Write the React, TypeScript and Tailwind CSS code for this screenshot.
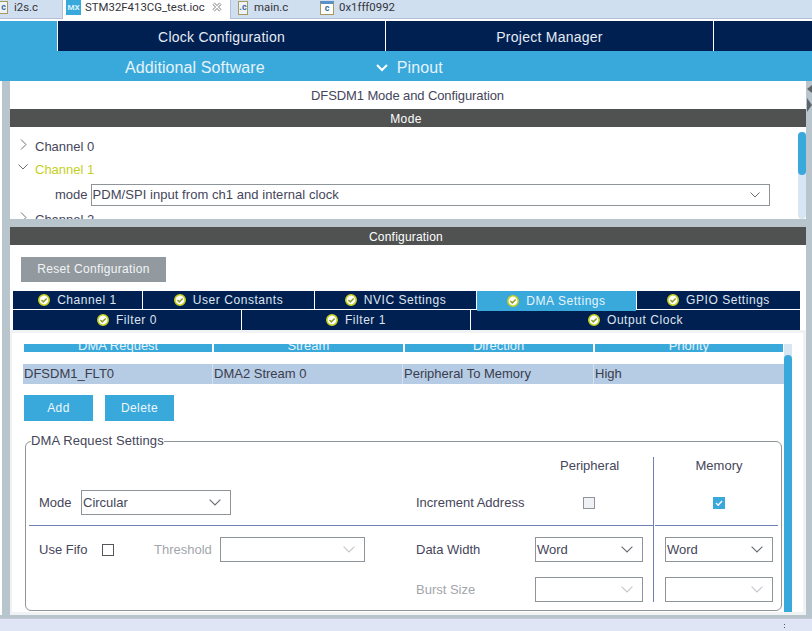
import React from "react";

const CheckDot = () => (
  <svg width="12" height="12" viewBox="0 0 12 12" className="shrink-0">
    <circle cx="6" cy="6" r="5.2" fill="#fff" stroke="#c3cf1b" strokeWidth="1.6" />
    <path d="M3.4 6l1.9 1.9 3.4-3.4" fill="none" stroke="#8fa02a" strokeWidth="1.5" />
  </svg>
);

const Chevron = ({ color = "#6b7076", size = 12 }: { color?: string; size?: number }) => (
  <svg width={size} height={size * 0.6} viewBox="0 0 10 6" className="shrink-0">
    <path d="M.5.5L5 5 9.5.5" fill="none" stroke={color} strokeWidth="1" />
  </svg>
);

const ChevronRight = () => (
  <svg width="7" height="11" viewBox="0 0 7 11">
    <path d="M1 .5L6 5.5 1 10.5" fill="none" stroke="#6b7076" strokeWidth="1" />
  </svg>
);

const CloseIcon = () => (
  <svg width="10" height="10" viewBox="0 0 10 10" className="shrink-0">
    <path d="M1.5 1.5l7 7M8.5 1.5l-7 7" fill="none" stroke="#85888c" strokeWidth="3" />
    <path d="M1.5 1.5l7 7M8.5 1.5l-7 7" fill="none" stroke="#fff" strokeWidth="1.4" />
  </svg>
);

function Tab({ label, active }: { label: string; active?: boolean }) {
  return (
    <div
      className={`h-full flex-1 flex items-center justify-center gap-[7px] text-[12px] tracking-[0.55px] ${
        active ? "bg-[#39a9dc] text-[#e8f4fa]" : "bg-[#002052] text-[#dfe5ee]"
      }`}
    >
      <CheckDot />
      <span>{label}</span>
    </div>
  );
}

function Select({ value, disabled, className }: { value?: string; disabled?: boolean; className: string }) {
  return (
    <div className={`h-[25px] border border-[#8f9498] bg-white flex items-center justify-between pl-[1px] pr-[9px] text-[13px] text-[#45465a] ${className}`}>
      <span>{value}</span>
      <Chevron color={disabled ? "#c4c8cc" : "#6b7076"} />
    </div>
  );
}

export default function App() {
  return (
    <div
      className="w-[812px] h-[631px] overflow-hidden flex flex-col bg-white text-[#45465a]"
      style={{ fontFamily: '"Liberation Sans", Arial, sans-serif' }}
    >
      {/* Editor tabs */}
      <div className="h-[19px] shrink-0 flex bg-[#d0dfef] border-b border-[#b4bfd6] font-['Roboto',sans-serif] text-[11.4px] text-[#33343a]">
        <div className="w-[63px] flex items-center gap-[6px] border-r border-[#b4bfd6] pb-[3px]">
          <span className="w-[8px] h-[13px] overflow-hidden border-y border-r border-[#a89a5a] bg-[#eef3fa] text-[9px] font-bold text-[#3a6ea5] flex items-center justify-end pr-[1px]">c</span>
          <span>i2s.c</span>
        </div>
        <div className="w-[167px] h-[21px] z-10 bg-white flex items-start pl-[3px]">
          <span className="w-[15px] h-[15px] shrink-0 mr-[4px] bg-[#39a9dc] text-[#dff1fa] text-[8px] font-bold flex items-center justify-center">MX</span>
          <span className="leading-[14px] w-[120px] shrink-0 whitespace-nowrap">STM32F413CG_test.ioc</span>
          <span className="ml-[7px] mt-[2px]"><CloseIcon /></span>
        </div>
        <div className="w-[90px] pl-[7px] flex items-center gap-[6px] border-l border-[#b4bfd6] pb-[3px]">
          <span className="w-[10px] h-[14px] shrink-0 border border-[#a89a5a] bg-[#eef3fa] text-[9px] font-bold text-[#3a6ea5] flex items-center justify-center">.c</span>
          <span>main.c</span>
        </div>
        <div className="flex-1 flex items-center gap-[5px] pb-[3px]">
          <span className="w-[14px] h-[14px] shrink-0 border border-[#a89a5a] border-t-[3px] border-t-[#5b8fc7] bg-white text-[9px] font-bold text-[#3a6ea5] flex items-center justify-center">c</span>
          <span>0x1fff0992</span>
        </div>
      </div>
      <div className="h-[2px] shrink-0 bg-white" />

      {/* Perspective nav */}
      <div className="h-[30px] shrink-0 flex bg-[#002052] text-[14px] tracking-[0.25px] text-[#e6ebf2]">
        <div className="w-[57px] bg-[#39a9dc]" />
        <div className="w-[329px] border-x border-white flex items-center justify-center pt-[2px]">Clock Configuration</div>
        <div className="w-[328px] border-r border-white flex items-center justify-center pt-[2px]">Project Manager</div>
      </div>
      <div className="h-[30px] shrink-0 flex items-center bg-[#39a9dc] text-[#e6f3fa] text-[16px] tracking-[0.1px] pt-[3px]">
        <span className="ml-[125px]">Additional Software</span>
        <span className="ml-[111px] mr-[9px]">
          <svg width="12" height="8" viewBox="0 0 12 8">
            <path d="M1 1l5 5 5-5" fill="none" stroke="#fff" strokeWidth="2" />
          </svg>
        </span>
        <span>Pinout</span>
      </div>

      <div className="flex-1 min-h-0 flex">
        <div className="w-[10px] shrink-0 border-l-2 border-white bg-[#b8c5cc]" />

        <div className="w-[796px] shrink-0 flex flex-col">
          <div className="h-[28px] shrink-0 flex items-center justify-center text-[13px] tracking-[-0.1px] pt-[1px] pr-[1px]">DFSDM1 Mode and Configuration</div>
          <div className="h-[18px] shrink-0 bg-[#505251] text-white text-[12px] tracking-[0.4px] flex items-center justify-center pt-[1px] pr-[4px]">Mode</div>

          {/* Mode tree */}
          <div className="h-[92px] shrink-0 overflow-hidden relative text-[13px]">
            <div className="h-[23px] mt-[8px] flex items-center">
              <span className="w-[25px] pl-[10px] mb-[4px]"><ChevronRight /></span>
              <span>Channel 0</span>
            </div>
            <div className="h-[23px] flex items-center">
              <span className="w-[25px] pl-[8px] mb-[6px]"><Chevron size={10} /></span>
              <span className="text-[#c5d01e]">Channel 1</span>
            </div>
            <div className="h-[27px] flex items-center pl-[45px]">
              <span className="mr-[3px]">mode</span>
              <div className="w-[679px] h-[22px] border border-[#8f9498] flex items-center justify-between pl-[1px] pr-[9px]">
                <span className="tracking-[0.05px]">PDM/SPI input from ch1 and internal clock</span>
                <Chevron size={10} />
              </div>
            </div>
            <div className="h-[23px] flex items-center">
              <span className="w-[25px] pl-[10px] mb-[4px]"><ChevronRight /></span>
              <span>Channel 2</span>
            </div>
            <div className="absolute right-0 top-[5px] bottom-0 w-[8px] rounded-[4px] bg-[#d8e6f4]">
              <div className="h-[43px] w-full rounded-[4px] bg-[#39a9dc]" />
            </div>
          </div>

          <div className="h-[8px] shrink-0 bg-[#b8c5cc]" />
          <div className="h-[18px] shrink-0 bg-[#505251] text-white text-[12px] tracking-[0.2px] flex items-center justify-center pt-[1px] pr-[4px]">Configuration</div>

          <div className="flex-1 min-h-0 flex flex-col">
            <div className="h-[46px] shrink-0 pl-[11px] pt-[12px]">
              <div className="w-[145px] h-[25px] bg-[#929aa0] text-[#f2f4f5] text-[12px] tracking-[0.35px] flex items-center justify-center pb-[1px]">Reset Configuration</div>
            </div>

            {/* Settings tabs */}
            <div className="ml-[3px] w-[787px] shrink-0 flex flex-col gap-[1px]">
              <div className="h-[18px] flex gap-[1px]">
                <div className="w-[129px] h-full"><Tab label="Channel 1" /></div>
                <div className="w-[171px] h-full"><Tab label="User Constants" /></div>
                <div className="w-[161px] h-full"><Tab label="NVIC Settings" /></div>
                <div className="w-[159px] h-[20px] z-10"><Tab label="DMA Settings" active /></div>
                <div className="flex-1 h-full"><Tab label="GPIO Settings" /></div>
              </div>
              <div className="h-[20px] flex gap-[1px]">
                <div className="w-[228px] h-full"><Tab label="Filter 0" /></div>
                <div className="w-[228px] h-full"><Tab label="Filter 1" /></div>
                <div className="flex-1 h-full"><Tab label="Output Clock" /></div>
              </div>
            </div>

            {/* DMA tab body */}
            <div className="flex-1 min-h-0 bg-[#f0f2f4] pl-[2px] pr-[3px] pt-[3px] pb-[3px]">
              <div className="h-full bg-white flex overflow-hidden">
                <div className="w-[773px] shrink-0 pl-[12px] pt-[11px]">
                  <div className="h-[8px] w-[759px] flex gap-[2px] overflow-hidden text-[13px] text-[#e6f3fa]">
                    {["DMA Request", "Stream", "Direction", "Priority"].map((h) => (
                      <div key={h} className="flex-1 bg-[#39a9dc] flex justify-center leading-none -mt-[5px]">{h}</div>
                    ))}
                  </div>
                  <div className="mt-[12px] -ml-[1px] w-[761px] h-[20px] bg-[#b5cce4] flex text-[13px] text-[#3b3c4c] divide-x divide-[#d4dfeb]">
                    <div className="w-[190px] pl-[1px] flex items-center">DFSDM1_FLT0</div>
                    <div className="w-[190px] pl-[1px] flex items-center">DMA2 Stream 0</div>
                    <div className="w-[191px] pl-[1px] flex items-center">Peripheral To Memory</div>
                    <div className="flex-1 pl-[1px] flex items-center">High</div>
                  </div>
                  <div className="mt-[11px] flex gap-[12px] text-[12px] text-[#eef7fb]">
                    <div className="w-[69px] h-[26px] bg-[#39a9dc] flex items-center justify-center tracking-[0.4px]">Add</div>
                    <div className="w-[69px] h-[26px] bg-[#39a9dc] flex items-center justify-center tracking-[0.4px]">Delete</div>
                  </div>

                  {/* Request settings */}
                  <fieldset className="mt-[12px] ml-[1px] w-[757px] h-[178px] border border-[#8f9498] rounded-[6px] pl-[3px] text-[13px] flex">
                    <legend className="ml-[2px] tracking-[0.1px] leading-[16px]">DMA Request Settings</legend>
                    <div className="flex w-full">
                      <div className="w-[624px] shrink-0 flex flex-col">
                        <div className="h-[77px] shrink-0 border-b border-[#6f82b5] flex">
                          <div className="w-[387px] pl-[10px] pt-[41px] flex items-start">
                            <span className="w-[42px] leading-[25px]">Mode</span>
                            <Select value="Circular" className="w-[150px]" />
                          </div>
                          <div className="flex-1 pt-[8px] flex flex-col">
                            <div className="h-[18px] pl-[144px] flex items-center">Peripheral</div>
                            <div className="h-[25px] mt-[15px] flex items-center">
                              <span className="w-[167px]">Increment Address</span>
                              <span className="w-[12px] h-[12px] border border-[#8f9498] bg-[#f0f1f4]" />
                            </div>
                          </div>
                        </div>
                        <div className="flex-1 flex">
                          <div className="w-[387px] pl-[10px] pt-[11px]">
                            <div className="flex items-center h-[25px]">
                              <span className="w-[63px]">Use Fifo</span>
                              <span className="w-[12px] h-[12px] border border-[#55565c]" />
                              <span className="ml-[40px] w-[66px] text-[#a3a5ab]">Threshold</span>
                              <Select disabled className="w-[145px]" />
                            </div>
                          </div>
                          <div className="flex-1 pt-[11px] flex flex-col gap-[15px]">
                            <div className="flex items-center h-[25px]">
                              <span className="w-[119px]">Data Width</span>
                              <Select value="Word" className="w-[108px]" />
                            </div>
                            <div className="flex items-center h-[25px]">
                              <span className="w-[119px] text-[#a3a5ab]">Burst Size</span>
                              <Select disabled className="w-[108px]" />
                            </div>
                          </div>
                        </div>
                      </div>
                      <div className="w-[125px] h-[145px] mt-[8px] shrink-0 border-l border-[#6f82b5] flex flex-col">
                        <div className="h-[69px] shrink-0 ml-[1px] border-b border-[#6f82b5] flex flex-col items-center pl-[5px]">
                          <div className="h-[18px] flex items-center">Memory</div>
                          <div className="h-[25px] mt-[15px] flex items-center">
                            <span className="w-[12px] h-[12px] bg-[#39a9dc] flex items-center justify-center">
                              <svg width="10" height="10" viewBox="0 0 10 10">
                                <path d="M2 5l2.2 2.2L8 3" fill="none" stroke="#fff" strokeWidth="1.3" />
                              </svg>
                            </span>
                          </div>
                        </div>
                        <div className="pl-[11px] pt-[11px] flex flex-col gap-[15px]">
                          <Select value="Word" className="w-[108px]" />
                          <Select disabled className="w-[108px]" />
                        </div>
                      </div>
                    </div>
                  </fieldset>
                </div>

                <div className="w-[8px] shrink-0 mt-[11px] bg-[#d8e6f4] -ml-[1px]">
                  <div className="mt-[11px] h-full rounded-t-[4px] bg-[#39a9dc]" />
                </div>
              </div>
            </div>
          </div>
        </div>

        {/* Right sash with collapse arrows */}
        <div className="w-[6px] shrink-0 bg-[#b8c5cc] pt-[4px]">
          <svg width="6" height="28" viewBox="0 0 6 28">
            <path d="M6 0L1 4l5 4z" fill="#5f6468" />
            <path d="M1 13l5 7-5 7z" fill="#5f6468" />
          </svg>
        </div>
      </div>

      {/* Status strip */}
      <div className="h-[3px] shrink-0 bg-[#b8c5cc]" />
      <div className="h-[13px] shrink-0 bg-[#dfe5f5] border-t border-[#c6cad6] flex justify-end items-start pt-[5px] pr-[27px]">
        <div className="flex flex-col gap-[2px]">
          <span className="w-[1px] h-[1px] bg-[#55565c]" />
          <span className="w-[1px] h-[1px] bg-[#55565c]" />
        </div>
      </div>
    </div>
  );
}
